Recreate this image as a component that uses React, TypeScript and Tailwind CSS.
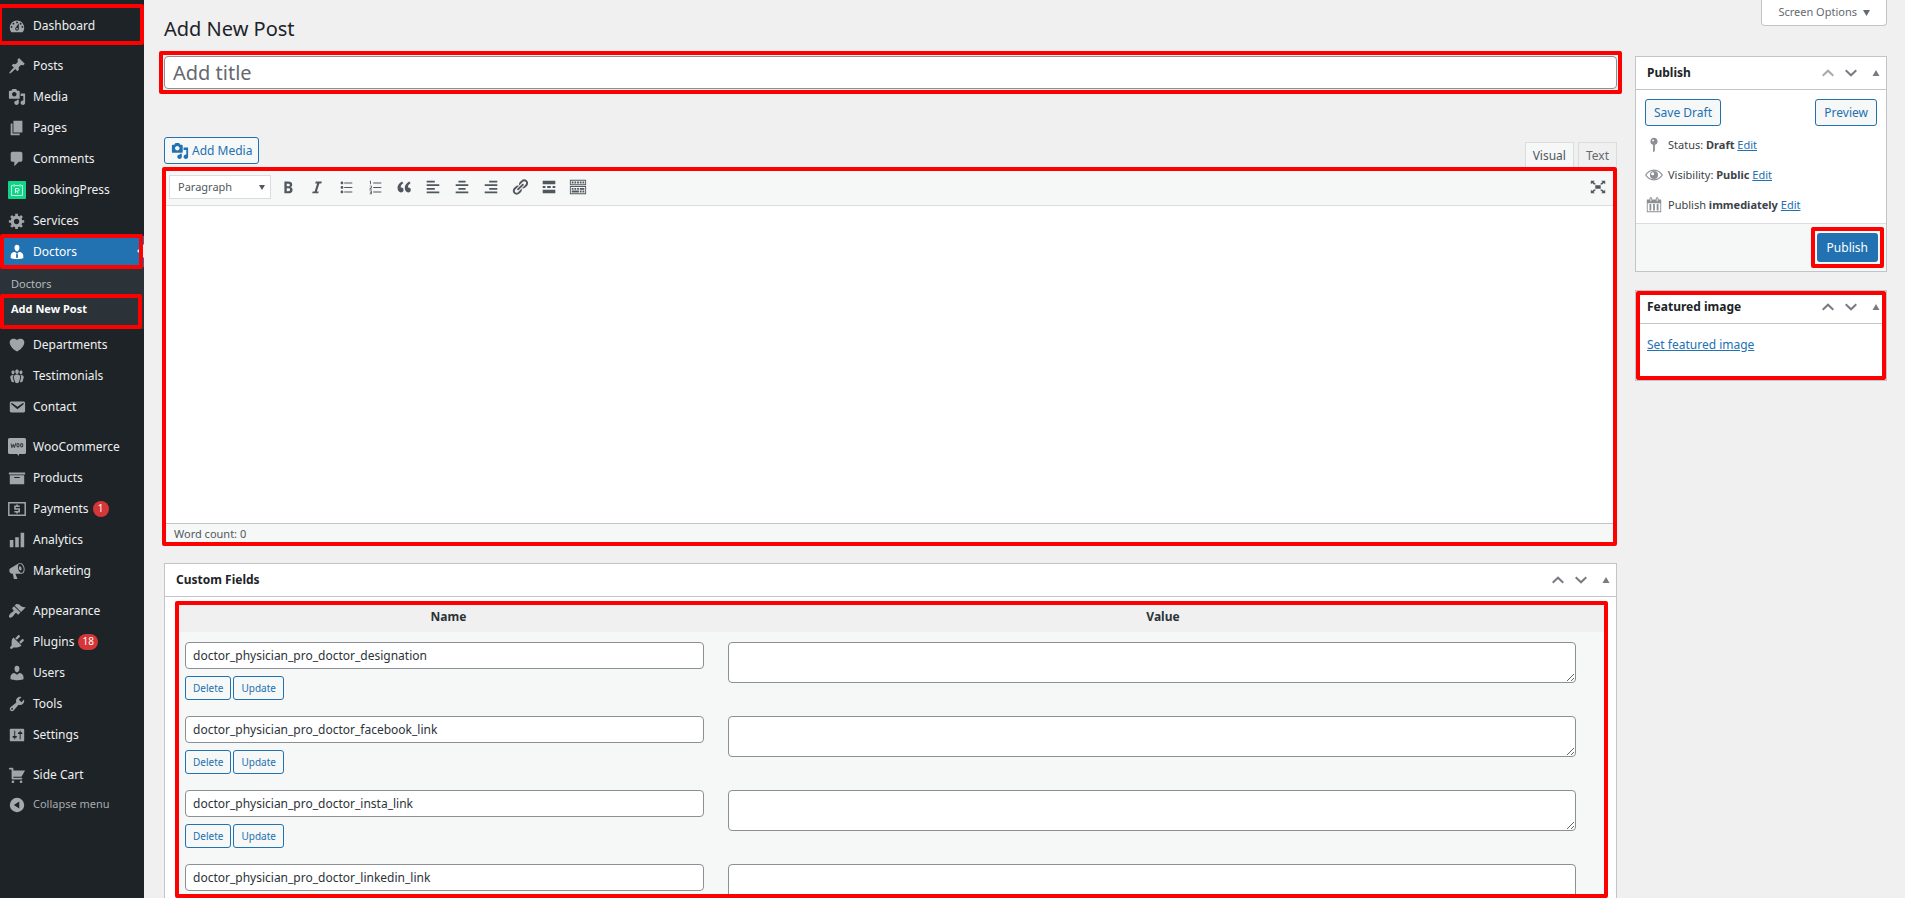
import React from 'react';

const paths = {
  dashboard: 'M3.76 17h12.48c1.1-1.37 1.76-3.11 1.76-5 0-4.42-3.58-8-8-8s-8 3.58-8 8c0 1.89.66 3.63 1.76 5zM10 5c.55 0 1 .45 1 1s-.45 1-1 1-1-.45-1-1 .45-1 1-1zM6 6.5c.55 0 1 .45 1 1s-.45 1-1 1-1-.45-1-1 .45-1 1-1zm8 0c.55 0 1 .45 1 1s-.45 1-1 1-1-.45-1-1 .45-1 1-1zm-5.37 5.05L12 7v6c0 1.1-.9 2-2 2s-2-.9-2-2c0-.57.24-1.08.63-1.45zM4 10c.55 0 1 .45 1 1s-.45 1-1 1-1-.45-1-1 .45-1 1-1zm12 0c.55 0 1 .45 1 1s-.45 1-1 1-1-.45-1-1 .45-1 1-1zM10 12c.55 0 1 .45 1 1s-.45 1-1 1-1-.45-1-1 .45-1 1-1z',
  post: 'M10.44 3.02l1.82-1.82 6.36 6.35-1.83 1.82c-1.05-.68-2.48-.57-3.41.36l-.75.75c-.92.93-1.04 2.35-.35 3.41l-1.83 1.82-2.41-2.41-2.8 2.79c-.42.42-3.38 2.71-3.8 2.29s1.86-3.39 2.28-3.81l2.79-2.79L4.1 9.36l1.83-1.82c1.05.69 2.48.57 3.4-.36l.75-.75c.93-.92 1.05-2.35.36-3.41z',
  media: 'M13 11V4c0-.55-.45-1-1-1h-1.67L9 1H5L3.67 3H2c-.55 0-1 .45-1 1v7c0 .55.45 1 1 1h10c.55 0 1-.45 1-1zM7 4.5c1.38 0 2.5 1.12 2.5 2.5S8.38 9.5 7 9.5 4.5 8.38 4.5 7 5.62 4.5 7 4.5zM14 6h5v10.5c0 1.38-1.12 2.5-2.5 2.5S14 17.88 14 16.5s1.12-2.5 2.5-2.5c.17 0 .34.02.5.05V9h-3V6zm-4 8.05V13h2v3.5c0 1.38-1.12 2.5-2.5 2.5S7 17.88 7 16.5 8.12 14 9.5 14c.17 0 .34.02.5.05z',
  page: 'M6 15V2h10v13H6zm-1 1h8v2H3V5h2v11z',
  comments: 'M5 2h9c1.1 0 2 .9 2 2v7c0 1.1-.9 2-2 2h-2l-5 5v-5H5c-1.1 0-2-.9-2-2V4c0-1.1.9-2 2-2z',
  generic: 'M18 12h-2.18c-.17.7-.44 1.35-.81 1.93l1.54 1.54-2.1 2.1-1.54-1.54c-.58.36-1.23.63-1.91.79V19H8v-2.18c-.68-.16-1.33-.43-1.91-.79l-1.54 1.54-2.12-2.12 1.54-1.54c-.36-.58-.63-1.23-.79-1.91H1V9.03h2.17c.16-.7.44-1.35.8-1.94L2.43 5.55l2.1-2.1 1.54 1.54c.58-.37 1.24-.64 1.93-.81V2h3v2.18c.68.16 1.33.43 1.91.79l1.54-1.54 2.12 2.12-1.54 1.54c.36.59.64 1.24.8 1.94H18V12zm-8.5 1.5c1.66 0 3-1.34 3-3s-1.34-3-3-3-3 1.34-3 3 1.34 3 3 3z',
  businessman: 'M7.3 6l-.03-.19c-.04-.37-.05-.73-.03-1.08.02-.36.1-.71.25-1.04.14-.32.31-.61.52-.86s.49-.46.83-.6c.34-.15.72-.23 1.13-.23.69 0 1.26.2 1.71.59s.76.87.91 1.44.18 1.16.09 1.78l-.03.19c-.01.09-.05.25-.11.48-.05.24-.12.47-.2.69-.08.21-.19.45-.34.72-.14.27-.3.49-.47.69-.18.19-.4.34-.67.48-.27.13-.55.19-.86.19s-.59-.06-.87-.19c-.26-.13-.49-.29-.67-.5-.18-.2-.34-.42-.49-.66-.15-.25-.26-.49-.34-.73-.09-.25-.16-.47-.21-.67-.06-.21-.1-.37-.12-.5zm9.2 6.24c.41.7.5 1.41.5 2.14v2.49c0 .03-.12.08-.29.13-.18.04-.42.13-.97.27-.55.12-1.1.24-1.65.34s-1.19.19-1.95.27c-.75.08-1.46.12-2.13.12-.68 0-1.39-.04-2.14-.12-.75-.07-1.4-.17-1.98-.27-.58-.11-1.08-.23-1.56-.34-.49-.11-.8-.21-1.06-.29L3 16.87v-2.49c0-.75.07-1.46.46-2.15s.81-1.25 1.5-1.68C5.66 10.12 7.19 10 8 10l1.67 1.67L9 13v3l1.02 1.08L11 16v-3l-.68-1.33L11.97 10c.77 0 2.2.07 2.9.52.71.45 1.21 1.02 1.63 1.72z',
  heart: 'M10 17.12c3.33-1.4 5.74-3.79 7.04-6.21 1.28-2.41 1.46-4.81.32-6.25-1.03-1.29-2.37-1.78-3.73-1.74s-2.68.63-3.63 1.46c-.95-.83-2.27-1.42-3.63-1.46s-2.7.45-3.73 1.74c-1.14 1.44-.96 3.84.34 6.25 1.28 2.42 3.69 4.81 7.02 6.21z',
  groups: 'M8.03 4.46c-.29 1.28.55 3.46 1.97 3.46 1.41 0 2.25-2.18 1.96-3.46-.22-.98-1.08-1.63-1.96-1.63-.89 0-1.74.65-1.97 1.63zm-4.13.9c-.25 1.08.47 2.93 1.67 2.93s1.92-1.85 1.67-2.93c-.19-.83-.92-1.39-1.67-1.39s-1.48.56-1.67 1.39zm8.86 0c-.25 1.08.47 2.93 1.66 2.93 1.2 0 1.92-1.85 1.67-2.93-.19-.83-.92-1.39-1.67-1.39-.74 0-1.47.56-1.66 1.39zm-.59 11.43l1.25-4.3C14.2 10 12.71 8.47 10 8.47c-2.72 0-4.21 1.53-3.44 4.02l1.26 4.3C8.05 17.51 9 18 10 18c.98 0 1.94-.49 2.17-1.21zm-6.1-7.63c-.49.67-.96 1.83-.42 3.59l1.12 3.79c-.34.2-.77.31-1.2.31-.85 0-1.65-.41-1.85-1.03l-1.07-3.65c-.65-2.11.61-3.4 2.92-3.4.27 0 .54.02.79.06-.1.1-.2.22-.29.33zm8.35-.39c2.31 0 3.58 1.29 2.92 3.4l-1.07 3.65c-.2.62-1 1.03-1.85 1.03-.43 0-.86-.11-1.2-.31l1.11-3.77c.55-1.78.08-2.94-.42-3.61-.08-.11-.18-.23-.28-.33.25-.04.51-.06.79-.06z',
  email: 'M3.87 4h13.25C18.37 4 19 4.59 19 5.79v8.42c0 1.19-.63 1.79-1.88 1.79H3.87c-1.25 0-1.88-.6-1.88-1.79V5.79c0-1.2.63-1.79 1.88-1.79zm6.62 8.6l6.74-5.53c.24-.2.43-.66.13-1.07-.29-.41-.82-.42-1.17-.17l-5.7 3.86L4.8 5.83c-.35-.25-.88-.24-1.17.17-.3.41-.11.87.13 1.07z',
  archive: 'M19 4v2H1V4h18zM2 7h16v10H2V7zm11 3V9H7v1h6z',
  chart: 'M18 18V2h-4v16h4zm-6 0V7H8v11h4zm-6 0v-8H2v8h4z',
  megaphone: 'M18.15 5.94c.46 1.62.38 3.22-.02 4.48-.42 1.28-1.26 2.18-2.3 2.48-.16.06-.26.06-.4.06-.06.02-.12.02-.18.02-.06.02-.14.02-.22.02h-6.8l2.22 5.5c.02.14-.06.26-.14.34-.08.1-.24.16-.34.16H6.95c-.1 0-.26-.06-.34-.16-.08-.08-.16-.2-.14-.34l-1-5.5H4.25l-.02-.02c-.5.06-1.08-.18-1.54-.62s-.88-1.08-1.06-1.88c-.24-.8-.2-1.56-.02-2.2.18-.62.58-1.08 1.06-1.3l.02-.02 9-5.4c.1-.06.18-.1.24-.16.06-.04.14-.08.24-.12.16-.08.28-.12.5-.18 1.04-.3 2.24.1 3.22.98s1.84 2.24 2.26 3.86zm-2.58 5.98h-.02c.4-.1.74-.34 1.04-.7.58-.7.86-1.76.86-3.04 0-.64-.1-1.3-.28-1.98-.34-1.36-1.02-2.5-1.78-3.24s-1.68-1.1-2.46-.88c-.82.22-1.4.96-1.7 2-.32 1.04-.28 2.36.06 3.72.38 1.36 1 2.5 1.8 3.24.78.74 1.62 1.1 2.48.88zm-2.54-7.08c.22-.04.42-.02.62.04.38.16.76.48 1.02 1s.42 1.2.42 1.78c0 .3-.04.56-.12.8-.18.48-.44.84-.86.94-.34.1-.8-.06-1.14-.4s-.64-.86-.78-1.5c-.18-.62-.12-1.24.02-1.72s.48-.84.82-.94z',
  appearance: 'M14.48 11.06L7.41 3.99l1.5-1.5c.5-.56 2.3-.47 3.51.32 1.21.8 1.43 1.28 2.91 2.1 1.18.64 2.45 1.26 4.45.85zm-.71.71L6.7 4.7 4.93 6.47c-.39.39-.39 1.02 0 1.41l1.06 1.06c.39.39.39 1.03 0 1.42-.6.6-1.43 1.11-2.21 1.69-.35.26-.7.53-1.01.84C1.43 14.23.4 16.08 1.4 17.07c.99 1 2.84-.03 4.18-1.36.31-.31.58-.66.85-1.02.57-.78 1.08-1.61 1.69-2.21.39-.39 1.02-.39 1.41 0l1.06 1.06c.39.39 1.02.39 1.41 0z',
  plugins: 'M13.11 4.36L9.87 7.6 8 5.73l3.24-3.24c.35-.34 1.05-.2 1.56.32.52.51.66 1.21.31 1.55zm-8 1.77l.91-1.12 9.01 9.01-1.19.84c-.71.71-2.63 1.16-3.82 1.16H6.14L4.9 17.26c-.59.59-1.54.59-2.12 0-.59-.58-.59-1.53 0-2.12l1.24-1.24v-3.88c0-1.13.4-3.19 1.09-3.89zm7.26 3.97l3.24-3.24c.34-.35 1.04-.21 1.55.31.52.51.66 1.21.31 1.55l-3.24 3.25z',
  users: 'M10 9.25c-2.27 0-2.73-3.44-2.73-3.44C7 4.02 7.82 2 9.97 2c2.16 0 2.98 2.02 2.71 3.81 0 0-.41 3.44-2.68 3.44zm0 2.57L12.72 10c2.39 0 4.52 2.33 4.52 4.53v2.49s-3.65 1.13-7.24 1.13c-3.65 0-7.24-1.13-7.24-1.13v-2.49c0-2.25 1.94-4.48 4.47-4.48z',
  tools: 'M16.68 9.77c-1.34 1.34-3.3 1.67-4.95.99l-5.41 6.52c-.99.99-2.59.99-3.58 0s-.99-2.59 0-3.57l6.52-5.42c-.68-1.65-.35-3.61.99-4.95 1.28-1.28 3.12-1.62 4.72-1.06l-2.89 2.89 2.82 2.82 2.86-2.87c.53 1.58.18 3.39-1.08 4.65zM3.81 16.21c.4.39 1.04.39 1.43 0 .4-.4.4-1.04 0-1.43-.39-.4-1.03-.4-1.43 0-.39.39-.39 1.03 0 1.43z',
  settings: 'M18 16V4c0-.55-.45-1-1-1H3c-.55 0-1 .45-1 1v12c0 .55.45 1 1 1h14c.55 0 1-.45 1-1zM8 11h1c.55 0 1 .45 1 1s-.45 1-1 1H8v1.5c0 .28-.22.5-.5.5s-.5-.22-.5-.5V13H6c-.55 0-1-.45-1-1s.45-1 1-1h1V5.5c0-.28.22-.5.5-.5s.5.22.5.5V11zm5-2h-1c-.55 0-1-.45-1-1s.45-1 1-1h1V5.5c0-.28.22-.5.5-.5s.5.22.5.5V7h1c.55 0 1 .45 1 1s-.45 1-1 1h-1v5.5c0 .28-.22.5-.5.5s-.5-.22-.5-.5V9z',
  cart: 'M6 13h9c.55 0 1 .45 1 1s-.45 1-1 1H5c-.55 0-1-.45-1-1V4H2c-.55 0-1-.45-1-1s.45-1 1-1h3c.55 0 1 .45 1 1v2h13l-4 7H6v1zm-.5 3c.83 0 1.5.67 1.5 1.5S6.33 19 5.5 19 4 18.33 4 17.5 4.67 16 5.5 16zm9 0c.83 0 1.5.67 1.5 1.5s-.67 1.5-1.5 1.5-1.5-.67-1.5-1.5.67-1.5 1.5-1.5z',
  collapse: 'M10 2a8 8 0 1 0 0 16 8 8 0 0 0 0-16zm2.5 4v8l-6-4z',
  bold: 'M6 4v13h4.54c1.37 0 2.46-.33 3.26-1 .8-.66 1.2-1.58 1.2-2.77 0-.84-.17-1.51-.51-2.01s-.9-.85-1.67-1.03v-.09c.57-.1 1.02-.4 1.36-.9s.51-1.13.51-1.91c0-1.14-.39-1.98-1.17-2.5C12.75 4.26 11.5 4 9.78 4H6zm2.57 5.15V6.26h1.36c.73 0 1.27.11 1.61.32.34.22.51.58.51 1.07 0 .54-.16.92-.47 1.15s-.82.35-1.51.35h-1.5zm0 2.19h1.6c1.44 0 2.16.53 2.16 1.61 0 .6-.17 1.05-.51 1.34s-.86.43-1.57.43H8.57v-3.38z',
  italic: 'M14.78 6h-2.13l-2.8 9h2.12l-.62 2H4.6l.62-2h2.14l2.8-9H8.03l.62-2h6.75z',
  ul: 'M5.5 7C4.67 7 4 6.33 4 5.5 4 4.68 4.67 4 5.5 4 6.32 4 7 4.68 7 5.5 7 6.33 6.32 7 5.5 7zM8 5h9v1H8V5zm-2.5 7c-.83 0-1.5-.67-1.5-1.5C4 9.68 4.67 9 5.5 9c.82 0 1.5.68 1.5 1.5 0 .83-.68 1.5-1.5 1.5zM8 10h9v1H8v-1zm-2.5 7c-.83 0-1.5-.67-1.5-1.5 0-.82.67-1.5 1.5-1.5.82 0 1.5.68 1.5 1.5 0 .83-.68 1.5-1.5 1.5zM8 15h9v1H8v-1z',
  ol: 'M8 5h9v1H8V5zm0 5h9v1H8v-1zm0 5h9v1H8v-1zM4.5 3h1v4h-1V4H4zM4 8.5h2.5v2.2L5 12h1.5v.8H3.8V12l1.8-1.7v-1H4zM4 14h2.5v4H4v-.8h1.6v-.8H4.5v-.8h1.1v-.8H4z',
  quote: 'M9.49 13.22c0-.74-.2-1.38-.61-1.9-.62-.78-1.83-.88-2.53-.72-.29-1.65 1.11-3.75 2.92-4.65L7.88 4c-2.73 1.3-5.42 4.28-4.96 8.05C3.21 14.43 4.59 16 6.54 16c.85 0 1.56-.25 2.12-.75s.83-1.18.83-2.03zm8.05 0c0-.74-.2-1.38-.61-1.9-.63-.78-1.83-.88-2.53-.72-.29-1.65 1.11-3.75 2.92-4.65L15.93 4c-2.73 1.3-5.41 4.28-4.95 8.05.29 2.38 1.66 3.95 3.61 3.95.85 0 1.56-.25 2.12-.75s.83-1.18.83-2.03z',
  left: 'M12 5V3H3v2h9zm5 4V7H3v2h14zm-5 4v-2H3v2h9zm5 4v-2H3v2h14z',
  center: 'M14 5V3H6v2h8zm3 4V7H3v2h14zm-3 4v-2H6v2h8zm3 4v-2H3v2h14z',
  right: 'M17 5V3H8v2h9zm0 4V7H3v2h14zm0 4v-2H8v2h9zm0 4v-2H3v2h14z',
  link: 'M17.74 2.76c1.68 1.69 1.68 4.41 0 6.1l-1.53 1.52c-1.12 1.12-2.7 1.47-4.14 1.09l2.62-2.61.76-.77.76-.76c.84-.84.84-2.2 0-3.04-.84-.85-2.2-.85-3.04 0l-.77.76-3.38 3.38c-.37-1.44-.02-3.02 1.1-4.14l1.52-1.53c1.69-1.68 4.42-1.68 6.1 0zM8.59 13.43l5.34-5.34c.42-.42.42-1.1 0-1.52-.44-.43-1.13-.39-1.53 0l-5.33 5.34c-.42.42-.42 1.1 0 1.52.44.43 1.13.39 1.52 0zm-.76 2.29l4.14-4.15c.38 1.44.03 3.02-1.09 4.14l-1.52 1.53c-1.69 1.68-4.41 1.68-6.1 0-1.68-1.68-1.68-4.42 0-6.1l1.53-1.52c1.12-1.12 2.7-1.47 4.14-1.1l-4.14 4.15c-.85.84-.85 2.2 0 3.05.84.84 2.2.84 3.04 0z',
  more: 'M17 7V3H3v4h14zM6 11V9H3v2h3zm6 0V9H8v2h4zm5 0V9h-3v2h3zm0 6v-4H3v4h14z',
  kitchen: 'M19 2v6H1V2h18zm-1 5V3H2v4h16zM5 4v2H3V4h2zm3 0v2H6V4h2zm3 0v2H9V4h2zm3 0v2h-2V4h2zm3 0v2h-2V4h2zm2 5v9H1V9h18zm-1 8v-7H2v7h16zM5 11v2H3v-2h2zm3 0v2H6v-2h2zm3 0v2H9v-2h2zm6 0v2h-5v-2h5zm-6 3v2H3v-2h8zm3 0v2h-2v-2h2zm3 0v2h-2v-2h2z',
  expand: 'M7 8h6v4H7zM2 3h4.500L5 4.500l3 2.500H6v.8L3.500 5.500 2 7zM18 3h-4.500L15 4.500 12 7h2v.8l2.500-2.300L18 7zM2 17h4.500L5 15.500 8 13H6v-.8l-2.500 2.300L2 13zM18 17h-4.500l1.500-1.500-3-2.500h2v-.8l2.500 2.300L18 13z',
  status: 'M14 6c0 1.86-1.28 3.41-3 3.86V16c0 1-2 2-2 2V9.86c-1.72-.45-3-2-3-3.86 0-2.21 1.79-4 4-4s4 1.79 4 4zM8 5c0 .55.45 1 1 1s1-.45 1-1-.45-1-1-1-1 .45-1 1z',
  visibility: 'M10 4C6 4 2.300 6.300 0 10c2.300 3.700 6 6 10 6s7.700-2.300 10-6c-2.300-3.700-6-6-10-6zm0 10.800c-3.300 0-6.400-1.700-8.500-4.800C3.600 6.900 6.700 5.200 10 5.200s6.400 1.700 8.500 4.800c-2.100 3.100-5.200 4.800-8.500 4.800zM10 5.500a4.500 4.500 0 1 0 0 9 4.500 4.500 0 0 0 0-9zM8.500 7a1.700 1.700 0 1 1 0 3.400 1.700 1.700 0 0 1 0-3.400z',
  calendar: 'M15 4h3v14H2V4h3V3c0-.83.67-1.5 1.5-1.5S8 2.17 8 3v1h4V3c0-.83.67-1.5 1.5-1.5S15 2.17 15 3v1zM6 3v2.5c0 .28.22.5.5.5s.5-.22.5-.5V3c0-.28-.22-.5-.5-.5S6 2.72 6 3zm7 0v2.5c0 .28.22.5.5.5s.5-.22.5-.5V3c0-.28-.22-.5-.5-.5s-.5.22-.5.5zm4 14V8H3v9h14zM7 16V9H5v7h2zm4 0V9H9v7h2zm4 0V9h-2v7h2z',
};

type IconName = keyof typeof paths;

const Icon = ({ name }: { name: IconName }) => (
  <svg className="h-[18px] w-[18px] shrink-0" viewBox="0 0 20 20" fill="currentColor" fillRule="evenodd" aria-hidden="true">
    <path d={paths[name]} />
  </svg>
);

const BookingPressIcon = () => (
  <svg className="h-[18px] w-[18px] shrink-0" viewBox="0 0 18 18" fill="none" aria-hidden="true">
    <rect width="18" height="18" rx="1" fill="#12d488" />
    <path d="M5 4.500H3.500v10h11v-10H13M7 4.500h4M6 3v3M12 3v3" stroke="#b9f3dc" />
    <path d="M7.500 12V7.500h2.300a1.300 1.300 0 0 1 0 2.600H7.500M9.500 10.500l.5 1.800" stroke="#e6fbf2" />
  </svg>
);

const WooIcon = () => (
  <svg className="h-[18px] w-[18px] shrink-0" viewBox="0 0 18 18" fill="none" aria-hidden="true">
    <path d="M1.5 0h15Q18 0 18 1.5v13q0 1.500-1.500 1.500H11v2L9 16H1.500Q0 16 0 14.500v-13Q0 0 1.500 0z" fill="#a7aaad" />
    <g stroke="#3c4247" strokeWidth="1.100" strokeLinejoin="round">
      <path d="M3 5.500l.8 4 1.500-3 1 3L8 5" />
      <ellipse cx="10" cy="7.300" rx="1.100" ry="1.700" />
      <ellipse cx="13.700" cy="7.300" rx="1.100" ry="1.700" />
    </g>
  </svg>
);

const PaymentsIcon = () => (
  <svg className="h-[18px] w-[18px] shrink-0" viewBox="0 0 18 18" fill="none" stroke="currentColor" aria-hidden="true">
    <path d="M.8 2.800h16.400v12.400H.8z" strokeWidth="1.500" />
    <path d="M11.700 6.300H7v2.700h4.200v2.700H6.300M9 4.500v2M9 11.500v2" strokeWidth="1.600" />
  </svg>
);

// Red highlight box, laid over the element it points at
const Highlight = ({ className }: { className: string }) => (
  <span className={`pointer-events-none absolute z-10 rounded-xs border-4 border-[#ff0000] ${className}`} />
);

interface MenuItem {
  label: string;
  icon: React.ReactNode;
  badge?: string;
}

const topItems: MenuItem[] = [
  { label: 'Posts', icon: <Icon name="post" /> },
  { label: 'Media', icon: <Icon name="media" /> },
  { label: 'Pages', icon: <Icon name="page" /> },
  { label: 'Comments', icon: <Icon name="comments" /> },
  { label: 'BookingPress', icon: <BookingPressIcon /> },
  { label: 'Services', icon: <Icon name="generic" /> },
];

const menuGroups: MenuItem[][] = [
  [
    { label: 'Departments', icon: <Icon name="heart" /> },
    { label: 'Testimonials', icon: <Icon name="groups" /> },
    { label: 'Contact', icon: <Icon name="email" /> },
  ],
  [
    { label: 'WooCommerce', icon: <WooIcon /> },
    { label: 'Products', icon: <Icon name="archive" /> },
    { label: 'Payments', icon: <PaymentsIcon />, badge: '1' },
    { label: 'Analytics', icon: <Icon name="chart" /> },
    { label: 'Marketing', icon: <Icon name="megaphone" /> },
  ],
  [
    { label: 'Appearance', icon: <Icon name="appearance" /> },
    { label: 'Plugins', icon: <Icon name="plugins" />, badge: '18' },
    { label: 'Users', icon: <Icon name="users" /> },
    { label: 'Tools', icon: <Icon name="tools" /> },
    { label: 'Settings', icon: <Icon name="settings" /> },
  ],
  [{ label: 'Side Cart', icon: <Icon name="cart" /> }],
];

const iconCell = 'flex w-[33px] shrink-0 justify-center';

const MenuLink = ({ item }: { item: MenuItem }) => (
  <a href="#" className="flex h-[31px] items-center text-[12px] text-[#f0f0f1] hover:text-[#72aee6]">
    <span className={`${iconCell} text-[#a0a5aa]`}>{item.icon}</span>
    {item.label}
    {item.badge && (
      <span className="ml-1 flex h-4 min-w-4 items-center justify-center rounded-full bg-[#d63638] px-1 text-[10px] text-white">
        {item.badge}
      </span>
    )}
  </a>
);

const Sidebar = () => (
  <nav aria-label="Main menu" className="w-36 shrink-0 bg-[#1d2327] pt-2.5">
    <div className="relative">
      <MenuLink item={{ label: 'Dashboard', icon: <Icon name="dashboard" /> }} />
      <Highlight className="-top-1.5 right-0 -bottom-1 -left-0.5" />
    </div>
    <div className="mt-[9px]">
      {topItems.map((item) => (
        <MenuLink key={item.label} item={item} />
      ))}
      <div className="relative">
        <a href="#" className="flex h-[31px] items-center bg-[#2271b1] text-[12px] text-white">
          <span className={iconCell}><Icon name="businessman" /></span>
          Doctors
        </a>
        <span className="absolute top-2 right-0 border-y-[7px] border-r-[7px] border-y-transparent border-r-[#f0f0f1]" />
        <Highlight className="-top-0.5 right-px -bottom-0.5 left-0" />
      </div>
      <div className="flex h-[62px] flex-col bg-[#2c3338] pt-1.5 text-[11px]">
        <a href="#" className="flex h-[22px] items-center pl-[11px] text-[#b4b9be]">Doctors</a>
        <div className="relative">
          <a href="#" className="flex h-7 items-center pl-[11px] font-bold text-white">Add New Post</a>
          <Highlight className="-top-px right-0.5 -bottom-1.5 left-0" />
        </div>
      </div>
    </div>
    {menuGroups.map((group, i) => (
      <div key={group[0].label} className={i > 0 ? 'mt-[9px]' : ''}>
        {group.map((item) => (
          <MenuLink key={item.label} item={item} />
        ))}
      </div>
    ))}
    <button type="button" className="flex h-[29px] items-center text-[11px] text-[#a7aaad]">
      <span className={iconCell}><Icon name="collapse" /></span>
      Collapse menu
    </button>
  </nav>
);

const PanelHead = ({ title, firstDim }: { title: string; firstDim?: boolean }) => (
  <div className="flex h-[33px] shrink-0 items-center justify-between border-b border-[#c3c4c7] pr-1.5 pl-[11px]">
    <h2 className="text-[12px] font-bold text-[#1d2327]">{title}</h2>
    <div className="flex items-center gap-[11px] text-[#787c82]">
      <button type="button" aria-label={`Move ${title} up`} className={firstDim ? 'text-[#a7aaad]' : ''}>
        <svg className="h-2 w-3" viewBox="0 0 12 8" fill="none" stroke="currentColor" strokeWidth="2"><path d="M.7 6.700L6 1.700l5.300 5" /></svg>
      </button>
      <button type="button" aria-label={`Move ${title} down`}>
        <svg className="h-2 w-3" viewBox="0 0 12 8" fill="none" stroke="currentColor" strokeWidth="2"><path d="M.7 1.300L6 6.300l5.300-5" /></svg>
      </button>
      <button type="button" aria-label={`Toggle ${title}`} className="pl-1">
        <svg className="h-2 w-2" viewBox="0 0 8 8" fill="currentColor"><path d="M4 1l3.500 6h-7z" /></svg>
      </button>
    </div>
  </div>
);

const tools: { name: IconName; label: string }[] = [
  { name: 'bold', label: 'Bold' },
  { name: 'italic', label: 'Italic' },
  { name: 'ul', label: 'Bulleted list' },
  { name: 'ol', label: 'Numbered list' },
  { name: 'quote', label: 'Blockquote' },
  { name: 'left', label: 'Align left' },
  { name: 'center', label: 'Align center' },
  { name: 'right', label: 'Align right' },
  { name: 'link', label: 'Insert link' },
  { name: 'more', label: 'Insert Read More tag' },
  { name: 'kitchen', label: 'Toolbar Toggle' },
];

const Editor = () => (
  <div className="relative flex h-[378px] shrink-0 flex-col bg-white">
    <Highlight className="top-0 right-0 -bottom-px -left-0.5" />
    <div className="flex h-[39px] shrink-0 items-center border-b border-[#dcdcde] bg-[#f6f7f7] pt-0.5 pr-2.5 pl-[5px] text-[#50575e]">
      <div className="relative mr-0.5">
        <select aria-label="Text format" className="block h-6 w-[102px] appearance-none border border-[#dcdcde] bg-white pl-2 text-[11px] text-[#50575e]">
          <option>Paragraph</option>
        </select>
        <svg className="pointer-events-none absolute top-2.5 right-1.5 h-[5px] w-1.5" viewBox="0 0 6 5" fill="currentColor"><path d="M0 0h6L3 5z" /></svg>
      </div>
      {tools.map((tool) => (
        <button key={tool.name} type="button" aria-label={tool.label} className="flex h-6 w-[29px] items-center justify-center">
          <Icon name={tool.name} />
        </button>
      ))}
      <button type="button" aria-label="Distraction-free writing" className="ml-auto"><Icon name="expand" /></button>
    </div>
    <textarea aria-label="Post content" className="w-full flex-1 resize-none p-3 text-[14px] outline-none" />
    <div className="flex h-[22px] shrink-0 items-center border-t border-[#c3c4c7] bg-[#f6f7f7] pl-2.5 text-[11px] text-[#50575e]">
      Word count: 0
    </div>
  </div>
);

const metaRows = [
  { key: 'doctor_physician_pro_doctor_designation', actions: true },
  { key: 'doctor_physician_pro_doctor_facebook_link', actions: true },
  { key: 'doctor_physician_pro_doctor_insta_link', actions: true },
  { key: 'doctor_physician_pro_doctor_linkedin_link', actions: false },
];

const smallButton = 'h-6 rounded-[3px] border border-[#2271b1] bg-[#f6f7f7] px-[7px] text-[10px] text-[#2271b1]';

const CustomFields = () => (
  <section className="mt-[18px] flex min-h-0 flex-1 flex-col overflow-hidden border border-b-0 border-[#c3c4c7] bg-white">
    <PanelHead title="Custom Fields" />
    <div className="relative mt-1 mr-2 ml-2.5 min-h-0 flex-1">
      <Highlight className="inset-0" />
      <div className="h-full overflow-hidden px-0.5">
        <table className="w-full table-fixed bg-[#f6f7f7]">
          <thead className="bg-[#f0f0f1] text-[12px] text-[#2c3338]">
            <tr className="h-[31px]">
              <th className="w-[38%] font-bold">Name</th>
              <th className="font-bold">Value</th>
            </tr>
          </thead>
          <tbody>
            {metaRows.map((row) => (
              <tr key={row.key} className="h-[74px] align-top">
                <td className="pt-2.5 pr-4 pl-2">
                  <input aria-label="Key" defaultValue={row.key} className="block h-[27px] w-full rounded-[4px] border border-[#8c8f94] bg-white px-[7px] text-[12px] text-[#2c3338]" />
                  {row.actions && (
                    <div className="mt-[7px] flex gap-0.5">
                      <button type="button" className={smallButton}>Delete</button>
                      <button type="button" className={smallButton}>Update</button>
                    </div>
                  )}
                </td>
                <td className="pt-2.5 pr-[30px] pl-2">
                  <textarea aria-label="Value" className="block h-[41px] w-full rounded-[4px] border border-[#8c8f94] bg-white p-1 text-[12px]" />
                </td>
              </tr>
            ))}
          </tbody>
        </table>
      </div>
    </div>
  </section>
);

const outlineButton = 'h-[27px] rounded-[3px] border border-[#2271b1] bg-[#f6f7f7] px-2 text-[12px] text-[#2271b1]';

const PublishRow = ({ icon, label, value }: { icon: IconName; label: string; value: string }) => (
  <div className="flex h-[30px] items-center text-[11px] text-[#3c434a]">
    <span className="mr-[5px] text-[#8c8f94]"><Icon name={icon} /></span>
    <p>
      {label} <b>{value}</b> <a href="#" className="text-[#2271b1] underline">Edit</a>
    </p>
  </div>
);

const SideColumn = () => (
  <aside className="w-[252px] shrink-0">
    <section className="border border-[#c3c4c7] bg-white">
      <PanelHead title="Publish" firstDim />
      <div className="flex h-[133px] flex-col px-[9px] pt-[9px]">
        <div className="flex justify-between">
          <button type="button" className={outlineButton}>Save Draft</button>
          <button type="button" className={outlineButton}>Preview</button>
        </div>
        <div className="mt-1">
          <PublishRow icon="status" label="Status:" value="Draft" />
          <PublishRow icon="visibility" label="Visibility:" value="Public" />
          <PublishRow icon="calendar" label="Publish" value="immediately" />
        </div>
      </div>
      <div className="flex h-12 items-center justify-end border-t border-[#dcdcde] bg-[#f6f7f7] pr-2">
        <div className="relative">
          <button type="button" className="block h-[29px] rounded-[3px] bg-[#2271b1] px-2.5 text-[12px] text-white">Publish</button>
          <Highlight className="-inset-1.5" />
        </div>
      </div>
    </section>
    <section className="relative mt-[18px] h-[91px] border border-[#c3c4c7] bg-white">
      <Highlight className="inset-0" />
      <PanelHead title="Featured image" />
      <a href="#" className="mt-3 ml-[11px] inline-block text-[12px] text-[#2271b1] underline">Set featured image</a>
    </section>
  </aside>
);

export default function App() {
  return (
    <div className="flex h-screen overflow-hidden bg-[#f0f0f1] font-['Noto_Sans',sans-serif]">
      <Sidebar />
      <main className="flex min-w-0 flex-1 flex-col pr-[18px] pl-5">
        <header className="flex h-14 shrink-0 items-start justify-between">
          <h1 className="pt-[15px] text-[20px] leading-7 text-[#1d2327]">Add New Post</h1>
          <button type="button" className="flex h-[26px] items-center gap-1.5 rounded-b-[4px] border border-t-0 border-[#c3c4c7] bg-white px-4 text-[11px] text-[#646970]">
            Screen Options
            <svg className="h-1.5 w-[7px]" viewBox="0 0 7 6" fill="currentColor"><path d="M0 0h7L3.500 6z" /></svg>
          </button>
        </header>
        <div className="flex min-h-0 flex-1 gap-[18px]">
          <div className="flex min-w-0 flex-1 flex-col">
            <div className="relative">
              <input aria-label="Add title" placeholder="Add title" className="block h-[33px] w-full rounded-[4px] border border-[#8c8f94] bg-white px-2 text-[20px] placeholder:text-[#646970]" />
              <Highlight className="-inset-[5px]" />
            </div>
            <div className="mt-12 flex h-[30px] shrink-0 items-start justify-between">
              <button type="button" className="flex h-[27px] items-center gap-[3px] rounded-[3px] border border-[#2271b1] bg-[#f6f7f7] px-1.5 text-[12px] text-[#2271b1]">
                <Icon name="media" />
                Add Media
              </button>
              <div className="flex gap-1 self-end text-[12px] text-[#646970]">
                <button type="button" className="h-[25px] border border-b-0 border-[#dcdcde] bg-[#f6f7f7] px-[7px] pt-px text-[#50575e]">Visual</button>
                <button type="button" className="h-[25px] border border-b-0 border-[#dcdcde] bg-[#f0f0f1] px-[7px] pt-px">Text</button>
              </div>
            </div>
            <Editor />
            <CustomFields />
          </div>
          <SideColumn />
        </div>
      </main>
    </div>
  );
}
